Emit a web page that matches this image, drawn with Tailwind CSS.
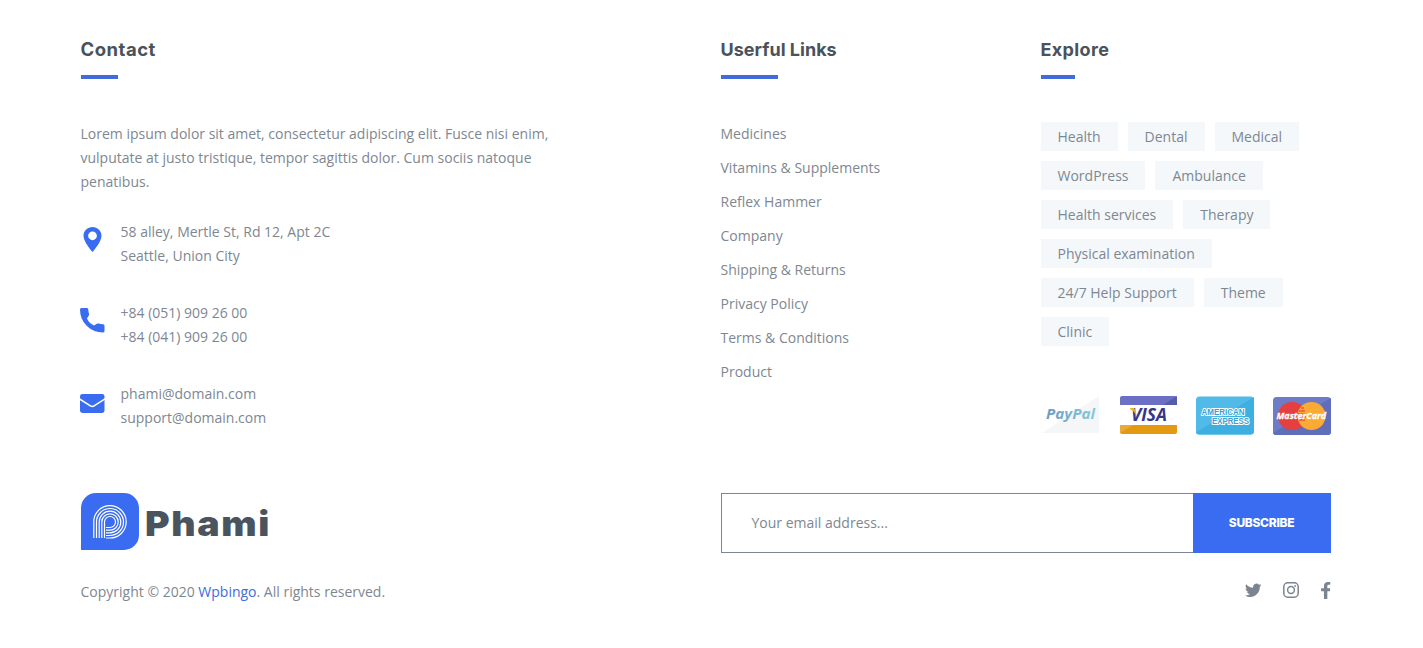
<!DOCTYPE html>
<html lang="en">
<head>
<meta charset="utf-8">
<title>Phami</title>
<script src="https://cdn.jsdelivr.net/npm/@tailwindcss/browser@4"></script>
</head>
<body class="bg-white font-['Open_Sans',sans-serif] text-sm leading-6 text-[#7e8791]">
<footer class="ml-[80.5px] w-[1250px] pt-[35px]">
  <div class="grid h-[458px] grid-cols-[640px_320px_290px]">
    <section>
      <h2 class="h-[44px] w-fit font-['Inter',sans-serif] text-[18.5px] leading-7 font-bold tracking-[0.5px] text-[#4a525b]">Contact</h2>
      <div class="-mt-1 h-1 w-[37px] bg-[#426bdc]"></div>
      <p class="mt-[43px] w-[480px]">Lorem ipsum dolor sit amet, consectetur adipiscing elit. Fusce nisi enim, vulputate at justo tristique, tempor sagittis dolor. Cum sociis natoque penatibus.</p>
      <ul class="mt-[26px] flex flex-col gap-[33px]">
        <li class="flex gap-[15.500px]">
          <svg class="-ml-[.5px] mt-[7px] h-[25px] w-[25px] text-[#396cf0]" viewBox="2 2 20 20" fill="currentColor" fill-rule="evenodd"><path d="M12 2C8.130 2 4.800 5.130 4.800 9c0 5.250 7.200 13 7.200 13s7.200-7.750 7.200-13c0-3.870-3.330-7-7.200-7zm0 3.500a3.500 3.500 0 1 1 0 7 3.500 3.500 0 0 1 0-7z"/></svg>
          <p>58 alley, Mertle St, Rd 12, Apt 2C<br>Seattle, Union City</p>
        </li>
        <li class="flex gap-4">
          <svg class="-ml-[.5px] mt-[7px] size-[24.500px] text-[#396cf0]" viewBox="0 0 24 24" fill="currentColor"><path d="M1.400 0H6.600Q8 0 8.100 1.400 8.200 3.500 8.800 5.500 9.200 7 8.200 8.200L6.800 10.200Q9 15 13.800 17.200L15.700 15.800Q16.800 14.900 18.200 15.200 20.400 15.800 22.600 15.900 24 16 24 17.400V22.500Q24 24 22.500 24 13 24 6.500 17.500 0 11 0 1.500 0 0 1.400 0Z"/></svg>
          <p>+84 (051) 909 26 00<br>+84 (041) 909 26 00</p>
        </li>
        <li class="flex gap-4">
          <svg class="-ml-[.5px] mt-[12px] h-[19px] w-[24.500px]" viewBox="0 0 24 19" preserveAspectRatio="none"><rect width="24" height="19" rx="2.4" fill="#396cf0"/><path d="M-1 4.600 10.200 11.800q1.800 1.200 3.600 0L25 4.600" fill="none" stroke="#fff" stroke-width="1.500"/></svg>
          <p>phami@domain.com<br>support@domain.com</p>
        </li>
      </ul>
    </section>
    <section>
      <h2 class="h-[44px] w-fit pt-px font-['Inter',sans-serif] text-[18px] leading-7 font-bold tracking-[0.02px] text-[#4a525b]">Userful Links</h2>
      <div class="-mt-1 h-1 w-[57px] bg-[#426bdc]"></div>
      <ul class="mt-[43px] flex flex-col gap-2.5">
        <li>Medicines</li><li>Vitamins &amp; Supplements</li><li>Reflex Hammer</li><li>Company</li><li>Shipping &amp; Returns</li><li>Privacy Policy</li><li>Terms &amp; Conditions</li><li>Product</li>
      </ul>
    </section>
    <section>
      <h2 class="h-[44px] w-fit pt-px font-['Inter',sans-serif] text-[18px] leading-7 font-bold tracking-[0.35px] text-[#4a525b]">Explore</h2>
      <div class="-mt-1 h-1 w-[34px] bg-[#426bdc]"></div>
      <div class="mt-[43px] flex flex-wrap gap-2.5 leading-[29px] *:h-[29px] *:bg-[#f4f8fb] *:px-[17px]">
        <span>Health</span><span>Dental</span><span>Medical</span><span>WordPress</span><span>Ambulance</span><span>Health services</span><span>Therapy</span><span>Physical examination</span><span>24/7 Help Support</span><span>Theme</span><span>Clinic</span>
      </div>
      <div class="mt-[50px] flex justify-end gap-[19px] *:h-[39px] *:w-[58px]">
        <svg viewBox="0 0 58 39">
          <defs><linearGradient id="pp"><stop offset="0" stop-color="#6b9bc0"/><stop offset="1" stop-color="#86cbdc"/></linearGradient></defs>
          <path d="M0 37 57 0V35q0 2-2 2Z" fill="#f5f6f8"/>
          <text x="4" y="22.5" textLength="49" lengthAdjust="spacingAndGlyphs" font-family="Open Sans" font-weight="700" font-style="italic" font-size="14" fill="url(#pp)">PayPal</text>
        </svg>
        <svg viewBox="0 0 58 39">
          <path d="M1 9V2q0-2 2-2h53q2 0 2 2v7Z" fill="#6b70c5"/><path d="M44 9 58 0v9Z" fill="#565cac"/>
          <path d="M1 29h57v7q0 2-2 2H3q-2 0-2-2Z" fill="#e39a10"/><path d="M1 38v-1L14 29H1Z" fill="#e9a93c"/>
          <text x="12" y="25" textLength="36" lengthAdjust="spacingAndGlyphs" font-family="Open Sans" font-weight="700" font-style="italic" font-size="17" fill="#34368a">VISA</text>
          <path d="M11 12.500h4l1.800 5Q15 14.500 11 12.500Z" fill="#f0b429" stroke="#f0b429"/>
        </svg>
        <svg viewBox="0 0 58 39">
          <rect y=".5" width="58" height="38" rx="3.500" fill="#52bae8"/><path d="M0 36.500 58 1v34q0 3.500-3.500 3.500H3Q0 38.500 0 35.500Z" fill="#3dafe0"/>
          <g font-family="Liberation Sans" font-weight="700" font-size="8.800" fill="#3a9fd2" stroke="#fff" stroke-width="2" stroke-linejoin="round" paint-order="stroke">
            <text x="5.500" y="18.500" textLength="43" lengthAdjust="spacingAndGlyphs">AMERICAN</text>
            <text x="16" y="28" textLength="37" lengthAdjust="spacingAndGlyphs">EXPRESS</text>
          </g>
        </svg>
        <svg viewBox="0 0 58 39">
          <rect y="1" width="58" height="38" rx="3.500" fill="#6d7cc5"/><path d="M0 37 58 2v33.500q0 3.500-3.500 3.500H3Q0 39 0 36Z" fill="#5f6dba"/>
          <circle cx="19" cy="20" r="14" fill="#e63f3f"/><circle cx="38.500" cy="20" r="14" fill="#fbaa34"/>
          <path d="M24.600 18h8M24.800 21h8M26 24h6M26 15h6M28 12h3" stroke="#e65a36" stroke-width="1.300"/>
          <text x="3.500" y="22.700" textLength="49.500" lengthAdjust="spacingAndGlyphs" font-family="Open Sans" font-weight="700" font-style="italic" font-size="9.500" fill="#fff" stroke="#fff" stroke-width=".3">MasterCard</text>
        </svg>
      </div>
    </section>
  </div>
  <div class="grid grid-cols-[640px_610px]">
    <div>
      <div class="flex h-[57px]">
        <svg class="h-[57px] w-[58px]" viewBox="81 493 58 57">
          <path d="M81 550V508a15 15 0 0 1 15-15h28a15 15 0 0 1 15 15v27a15 15 0 0 1-15 15Z" fill="#396cf0"/>
          <g fill="none" stroke="#fff" stroke-width="1.200">
            <path d="M93.800 538V522.200a16.200 16.200 0 1 1 16.200 15.800H106"/>
            <path d="M96.500 538V522a13.500 13.500 0 1 1 13.500 13.500H106"/>
            <path d="M99.200 538V522a10.800 10.800 0 1 1 10.800 10.800H106"/>
            <path d="M101.800 538V522a8.200 8.200 0 1 1 8.200 8.200H106"/>
            <path d="M104.500 538V522a5.500 5.500 0 1 1 5.500 5.500H106"/>
          </g>
        </svg>
        <svg class="h-[57px] w-[136px]" viewBox="0 0 136 57"><text x="6" y="43" textLength="126" lengthAdjust="spacingAndGlyphs" font-family="Inter" font-weight="900" font-size="34" letter-spacing="1.500" fill="#4a545f">Phami</text></svg>
      </div>
      <p class="mt-[30px]">Copyright © 2020 <a class="text-[#426bdc]">Wpbingo</a>. All rights reserved.</p>
    </div>
    <div>
      <form class="flex h-[60px]">
        <div class="flex-1 border border-r-0 border-[#7e8791] pl-[30px] leading-[58px]">Your email address...</div>
        <button type="button" class="w-[138px] bg-[#396cf0] font-['Inter',sans-serif] text-xs font-extrabold tracking-[-0.3px] text-white">SUBSCRIBE</button>
      </form>
      <div class="mt-[27px] flex h-5 items-center justify-end text-[#7b8590]">
        <svg class="mr-[22px] size-[16.500px]" viewBox="0 0 24 24" fill="currentColor"><path d="M24 4.600a10 10 0 0 1-2.800.8 5 5 0 0 0 2.200-2.700c-1 .6-2 1-3.100 1.200a4.900 4.900 0 0 0-8.400 4.500A14 14 0 0 1 1.700 3.200a4.900 4.900 0 0 0 1.500 6.500 5 5 0 0 1-2.200-.6v.1a4.900 4.900 0 0 0 4 4.800 5 5 0 0 1-2.300.1 4.900 4.900 0 0 0 4.600 3.400A9.900 9.900 0 0 1 0 19.500a14 14 0 0 0 7.500 2.200c9.100 0 14-7.500 14-14v-.6A10 10 0 0 0 24 4.600z"/></svg>
        <svg class="mr-[22px] size-4" viewBox="0 0 16 16" fill="none" stroke="currentColor" stroke-width="1.500"><rect x=".8" y=".8" width="14.400" height="14.400" rx="4"/><circle cx="8" cy="8" r="3.400"/><circle cx="12.200" cy="3.900" r=".9" fill="currentColor" stroke="none"/></svg>
        <svg class="h-[17px] w-[9.5px]" viewBox="0 0 9 16" preserveAspectRatio="none" fill="currentColor"><path d="M8.800.1v2.600H7.200C6.200 2.700 6 3.300 6 4v1.900h2.800l-.4 2.900H6V16H2.800V8.800H.1V5.900h2.700V3.700C2.800 1.300 4.300 0 6.500 0z"/></svg>
      </div>
    </div>
  </div>
</footer>
</body>
</html>
